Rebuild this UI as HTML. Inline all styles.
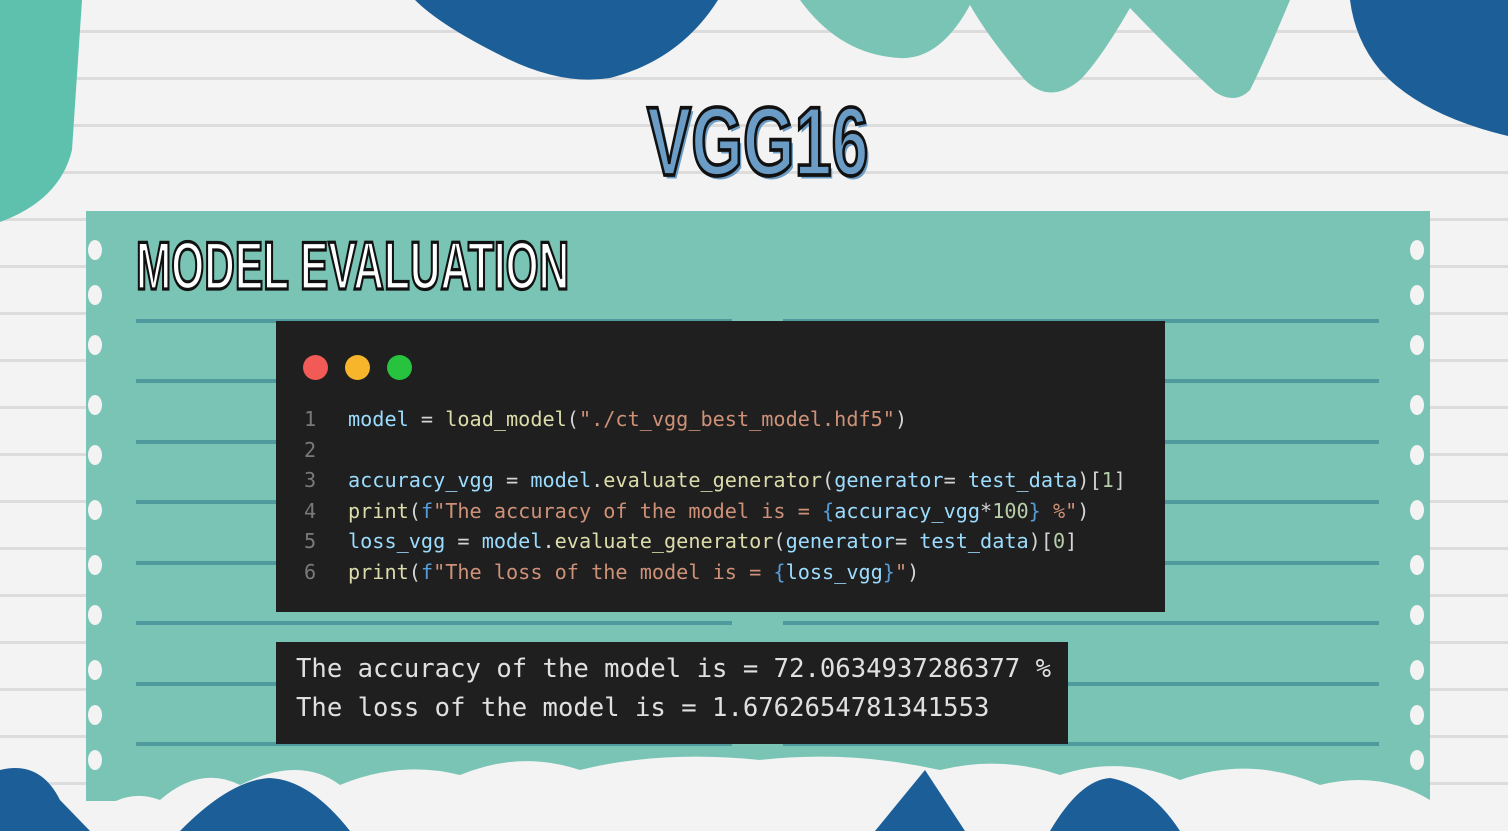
<!DOCTYPE html>
<html><head><meta charset="utf-8"><style>
*{margin:0;padding:0;box-sizing:border-box}
body{width:1508px;height:831px;overflow:hidden;position:relative;background:#f3f3f3;font-family:"Liberation Sans",sans-serif}
.hl{position:absolute;left:0;width:1508px;height:3px;background:#dcdcdc}
.panel{position:absolute;left:86px;top:211px;width:1344px;height:590px;background:#79c4b4}
.dl{position:absolute;height:4px;background:#4f9a9c}
.title{position:absolute;font-family:"Liberation Sans Narrow","Liberation Sans",sans-serif;font-weight:bold;white-space:nowrap;transform-origin:0 0}
.code{position:absolute;left:276px;top:321px;width:889px;height:291px;background:#1f1f1f}
.dot{position:absolute;top:355px;width:25px;height:25px;border-radius:50%}
.ln{position:absolute;font-family:"DejaVu Sans Mono","Liberation Mono",monospace;font-size:20.2px;white-space:pre;color:#d4d4d4;line-height:30.5px}
.num{color:#7a7a7a}
.v{color:#9cdcfe}.f{color:#dcdcaa}.s{color:#ce9178}.k{color:#569cd6}.n{color:#b5cea8}
.out{position:absolute;left:276px;top:642px;width:792px;height:102px;background:#1f1f1f}
.hole{position:absolute;width:14px;height:20px;border-radius:50%;background:#f3f3f3}
</style></head><body>
<div class="hl" style="top:30px"></div><div class="hl" style="top:77px"></div><div class="hl" style="top:124px"></div><div class="hl" style="top:171px"></div><div class="hl" style="top:218px"></div><div class="hl" style="top:265px"></div><div class="hl" style="top:312px"></div><div class="hl" style="top:359px"></div><div class="hl" style="top:406px"></div><div class="hl" style="top:453px"></div><div class="hl" style="top:500px"></div><div class="hl" style="top:547px"></div><div class="hl" style="top:594px"></div><div class="hl" style="top:641px"></div><div class="hl" style="top:688px"></div><div class="hl" style="top:735px"></div><div class="hl" style="top:782px"></div>

<svg style="position:absolute;left:0;top:0" width="1508" height="831">
<path d="M0 0 H82 L72 150 Q60 200 0 222 Z" fill="#5ec1ad"/>
<path d="M415 0 H718 Q680 60 610 78 Q560 86 500 55 Q440 25 415 0Z" fill="#1c5f98"/>
<path d="M800 0 H1290 Q1265 60 1250 90 Q1235 105 1215 92 Q1180 60 1130 8 Q1100 60 1080 80 Q1050 105 1025 80 Q990 40 970 5 Q940 60 900 58 Q840 55 800 0Z" fill="#79c4b4"/>
<path d="M1350 0 H1508 V136 Q1420 115 1380 70 Q1355 40 1350 0Z" fill="#1c5f98"/>
</svg>

<div class="panel"></div>
<svg style="position:absolute;left:0;top:740px" width="1508" height="91">
<path d="M86 85 Q120 45 160 60 Q200 25 240 45 Q300 15 340 45 Q400 20 460 35 Q520 10 580 30 Q660 10 760 20 Q850 10 940 30 Q1000 15 1060 35 Q1120 15 1180 40 Q1250 15 1320 45 Q1380 30 1430 60 V91 H86Z" fill="#f3f3f3"/>
<path d="M0 30 Q40 20 60 60 L90 91 H0Z" fill="#1c5f98"/>
<path d="M180 91 Q230 40 270 38 Q310 40 350 91Z" fill="#1c5f98"/>
<path d="M875 91 L925 30 L965 91Z" fill="#1c5f98"/>
<path d="M1050 91 Q1080 40 1110 38 Q1150 45 1180 91Z" fill="#1c5f98"/>
</svg>

<div class="hole" style="left:88px;top:240px"></div><div class="hole" style="left:88px;top:285px"></div><div class="hole" style="left:88px;top:335px"></div><div class="hole" style="left:88px;top:395px"></div><div class="hole" style="left:88px;top:445px"></div><div class="hole" style="left:88px;top:500px"></div><div class="hole" style="left:88px;top:555px"></div><div class="hole" style="left:88px;top:605px"></div><div class="hole" style="left:88px;top:660px"></div><div class="hole" style="left:88px;top:705px"></div><div class="hole" style="left:88px;top:750px"></div>
<div class="hole" style="left:1410px;top:240px"></div><div class="hole" style="left:1410px;top:285px"></div><div class="hole" style="left:1410px;top:335px"></div><div class="hole" style="left:1410px;top:395px"></div><div class="hole" style="left:1410px;top:445px"></div><div class="hole" style="left:1410px;top:500px"></div><div class="hole" style="left:1410px;top:555px"></div><div class="hole" style="left:1410px;top:605px"></div><div class="hole" style="left:1410px;top:660px"></div><div class="hole" style="left:1410px;top:705px"></div><div class="hole" style="left:1410px;top:750px"></div>

<div class="dl" style="left:136px;top:319px;width:596px"></div><div class="dl" style="left:783px;top:319px;width:596px"></div>
<div class="dl" style="left:136px;top:379px;width:1243px"></div>
<div class="dl" style="left:136px;top:440px;width:1243px"></div>
<div class="dl" style="left:136px;top:500px;width:1243px"></div>
<div class="dl" style="left:136px;top:561px;width:1243px"></div>
<div class="dl" style="left:136px;top:621px;width:596px"></div><div class="dl" style="left:783px;top:621px;width:596px"></div>
<div class="dl" style="left:136px;top:682px;width:1243px"></div>
<div class="dl" style="left:136px;top:742px;width:596px"></div><div class="dl" style="left:783px;top:742px;width:596px"></div>

<div class="title" style="left:647px;top:86px;font-size:80px;color:#6a9cc6;-webkit-text-stroke:3px #111;transform:scale(0.83,1.22);text-shadow:3px 3px 0 #6a9cc6">VGG16</div>
<div class="title" style="left:136px;top:228px;font-size:52px;color:#fff;-webkit-text-stroke:2.5px #111;transform:scale(0.815,1.3)">MODEL EVALUATION</div>

<div class="code"></div>
<div class="dot" style="left:303px;background:#f25a58"></div>
<div class="dot" style="left:345px;background:#f7b52b"></div>
<div class="dot" style="left:387px;background:#27c23e"></div>
<div class="ln num" style="left:304px;top:404px">1
2
3
4
5
6</div>
<div class="ln" style="left:348px;top:404px"><span class="v">model</span> = <span class="f">load_model</span>(<span class="s">"./ct_vgg_best_model.hdf5"</span>)

<span class="v">accuracy_vgg</span> = <span class="v">model</span>.<span class="f">evaluate_generator</span>(<span class="v">generator</span>= <span class="v">test_data</span>)[<span class="n">1</span>]
<span class="f">print</span>(<span class="k">f</span><span class="s">"The accuracy of the model is = </span><span class="k">{</span><span class="v">accuracy_vgg</span>*<span class="n">100</span><span class="k">}</span><span class="s"> %"</span>)
<span class="v">loss_vgg</span> = <span class="v">model</span>.<span class="f">evaluate_generator</span>(<span class="v">generator</span>= <span class="v">test_data</span>)[<span class="n">0</span>]
<span class="f">print</span>(<span class="k">f</span><span class="s">"The loss of the model is = </span><span class="k">{</span><span class="v">loss_vgg</span><span class="k">}</span><span class="s">"</span>)</div>

<div class="out"></div>
<div class="ln" style="left:296px;top:650px;font-size:25.6px;line-height:39px;color:#e0e0e0">The accuracy of the model is = 72.0634937286377 %
The loss of the model is = 1.6762654781341553</div>
</body></html>
